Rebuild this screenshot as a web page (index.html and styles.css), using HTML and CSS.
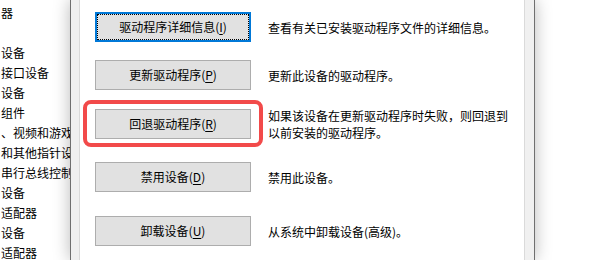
FILE: index.html
```html
<!DOCTYPE html>
<html lang="zh-CN">

<head>
    <meta http-equiv="Content-Type" content="text/html;charset=UTF-8">
    <meta name="viewport" content="width=device-width, initial-scale=1.0">
    <title>设备属性 – 驱动程序</title>
    <link rel="stylesheet" href="styles.css">
</head>

<body>
    <div class="screen">
        <ul class="device-tree">
            <li>器</li>
            <li></li>
            <li>设备</li>
            <li>接口设备</li>
            <li>设备</li>
            <li>组件</li>
            <li>、视频和游戏控制器</li>
            <li>和其他指针设备</li>
            <li>串行总线控制器</li>
            <li>设备</li>
            <li>适配器</li>
            <li>设备</li>
            <li>适配器</li>
            <li>设备</li>
        </ul>

        <div class="dialog">
            <div class="tab-page">
                <div class="action">
                    <button class="action-button is-focused">驱动程序详细信息(<u>I</u>)</button>
                    <p class="action-desc">查看有关已安装驱动程序文件的详细信息。</p>
                </div>

                <div class="action action-update">
                    <button class="action-button">更新驱动程序(<u>P</u>)</button>
                    <p class="action-desc">更新此设备的驱动程序。</p>
                </div>

                <div class="action action-rollback">
                    <button class="action-button">回退驱动程序(<u>R</u>)</button>
                    <p class="action-desc">如果该设备在更新驱动程序时失败，则回退到以前安装的驱动程序。</p>
                    <span class="highlight"></span>
                </div>

                <div class="action action-disable">
                    <button class="action-button">禁用设备(<u>D</u>)</button>
                    <p class="action-desc">禁用此设备。</p>
                </div>

                <div class="action action-uninstall">
                    <button class="action-button">卸载设备(<u>U</u>)</button>
                    <p class="action-desc">从系统中卸载设备(高级)。</p>
                </div>
            </div>
        </div>
    </div>
</body>

</html>
```

FILE: styles.css
```css
html,
body {
    margin: 0;
    height: 100%;
    overflow: hidden;
    background-color: #ffffff;
}

body {
    color: #000000;
    font-family: "Noto Sans CJK SC", "Noto Sans", sans-serif;
    font-size: 12px;
}

.screen {
    display: flex;
    height: 260px;
}

.device-tree {
    width: 69px;
    flex-shrink: 0;
    margin: 0;
    padding: 3px 0 0 1px;
    list-style: none;
    overflow: hidden;
    white-space: nowrap;
}

.device-tree li {
    height: 20px;
    line-height: 20px;
}

.dialog {
    position: relative;
    z-index: 1;
    display: flex;
    width: 463px;
    flex-shrink: 0;
    padding: 0 9px 0 8px;
    background-color: #f0f0f0;
    border-left: 1px solid #6f6f6f;
    border-right: 1px solid #6f6f6f;
    box-shadow: 0 0 16px rgba(0, 0, 0, 0.28);
    box-sizing: border-box;
    width: 465px;
}

.tab-page {
    flex: 1;
    padding: 12px 0 0 15px;
    background-color: #ffffff;
    border-left: 1px solid #dadada;
    border-right: 1px solid #dadada;
}

.action {
    position: relative;
    display: flex;
    align-items: center;
    height: 30px;
}

.action-update {
    margin-top: 18px;
}

.action-rollback {
    margin-top: 19px;
}

.action-disable {
    margin-top: 23px;
}

.action-uninstall {
    margin-top: 24px;
}

.action-button {
    flex-shrink: 0;
    width: 156px;
    height: 30px;
    padding: 0;
    background-color: #e1e1e1;
    border: 1px solid #adadad;
    color: #000000;
    font-family: inherit;
    font-size: 12px;
    line-height: 16px;
}

.action-button.is-focused {
    border: 2px solid #0078d7;
    outline: 1px dotted #000000;
    outline-offset: -3px;
}

.action-button u {
    text-underline-offset: 2px;
}

.action-desc {
    width: 244px;
    margin: 0 0 0 17px;
    line-height: 17px;
}

.highlight {
    position: absolute;
    left: -12px;
    top: -9px;
    width: 172px;
    height: 39px;
    border: 4px solid #f24a4a;
    border-radius: 8px;
    pointer-events: none;
}
```
